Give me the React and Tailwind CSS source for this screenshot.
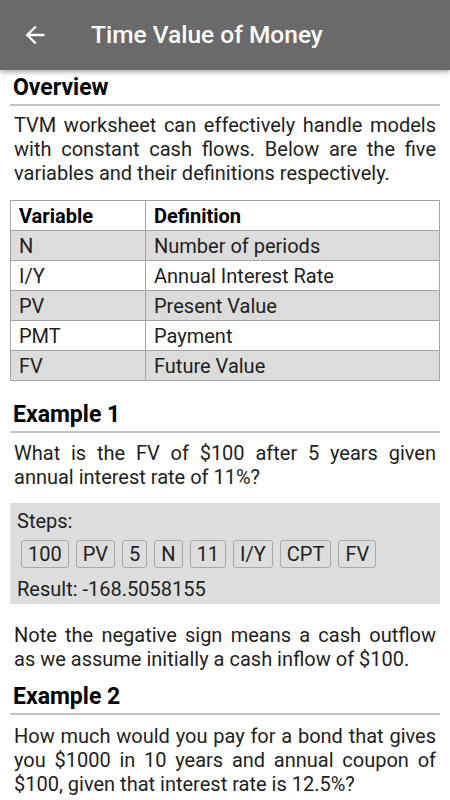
import React from 'react';

const rows = [
    { v: 'N', d: 'Number of periods' },
    { v: 'I/Y', d: 'Annual Interest Rate' },
    { v: 'PV', d: 'Present Value' },
    { v: 'PMT', d: 'Payment' },
    { v: 'FV', d: 'Future Value' },
];

const keys = ['100', 'PV', '5', 'N', '11', 'I/Y', 'CPT', 'FV'];

const Heading = ({ children, className = '' }) => (
    <h2 className={`text-[23px] leading-[26px] font-bold text-black px-[3px] pb-[3px] border-b-2 border-[#c4c4c4] ${className}`}>
        {children}
    </h2>
);

const Para = ({ children, className = '' }) => (
    <p className={`text-[20px] leading-[24px] text-[#1e1e1e] px-1 text-justify ${className}`}>{children}</p>
);

const App = () => {
    return (
        <div className="w-[450px] min-h-[800px] bg-white font-['Roboto',sans-serif] overflow-hidden">
            <div className="h-[70px] bg-[#6a6a6a] flex items-center shadow-[0_2px_5px_rgba(0,0,0,0.35)] relative z-10">
                <div className="w-[91px] pl-[21px] flex items-center">
                    <svg width="28" height="28" viewBox="0 0 24 24" fill="white">
                        <path d="M20 11H7.83l5.59-5.59L12 4l-8 8 8 8 1.41-1.41L7.83 13H20v-2z" />
                    </svg>
                </div>
                <h1 className="text-white text-[24.5px] font-medium">Time Value of Money</h1>
            </div>

            <div className="px-[10px]">
                <Heading className="mt-[5px]">Overview</Heading>
                <Para className="mt-[7px]">
                    TVM worksheet can effectively handle models with constant cash flows. Below are the five variables and their definitions respectively.
                </Para>

                <table className="mt-[15px] w-full border-collapse text-[20px] leading-[24px] text-[#1e1e1e]">
                    <thead>
                        <tr className="bg-white h-[30px]">
                            <th className="w-[135px] border border-[#a4a4a4] text-left font-bold px-2 py-0 text-black">Variable</th>
                            <th className="border border-[#a4a4a4] text-left font-bold px-2 py-0 text-black">Definition</th>
                        </tr>
                    </thead>
                    <tbody>
                        {rows.map((r, i) => (
                            <tr key={r.v} className={`h-[30px] ${i % 2 === 0 ? 'bg-[#dcdcdc]' : 'bg-white'}`}>
                                <td className="border border-[#a4a4a4] px-2 py-0">{r.v}</td>
                                <td className="border border-[#a4a4a4] px-2 py-0">{r.d}</td>
                            </tr>
                        ))}
                    </tbody>
                </table>

                <Heading className="mt-[21px]">Example 1</Heading>
                <Para className="mt-[8px]">What is the FV of $100 after 5 years given annual interest rate of 11%?</Para>

                <div className="mt-[14px] bg-[#dddddd] pl-[7px] pt-[6px] pb-[3px] text-[20px] leading-[24px] text-[#1e1e1e]">
                    <div>Steps:</div>
                    <div className="mt-[7px] ml-[4px] flex gap-[7px]">
                        {keys.map((k, i) => (
                            <span key={i} className="h-[28px] px-[6px] flex items-center border border-[#a8a8a8] rounded-[3px]">
                                {k}
                            </span>
                        ))}
                    </div>
                    <div className="mt-[9px]">Result: -168.5058155</div>
                </div>

                <Para className="mt-[19px]">Note the negative sign means a cash outflow as we assume initially a cash inflow of $100.</Para>

                <Heading className="mt-[13px]">Example 2</Heading>
                <Para className="mt-[9px]">
                    How much would you pay for a bond that gives you $1000 in 10 years and annual coupon of $100, given that interest rate is 12.5%?
                </Para>
            </div>
        </div>
    );
};

export default App;
